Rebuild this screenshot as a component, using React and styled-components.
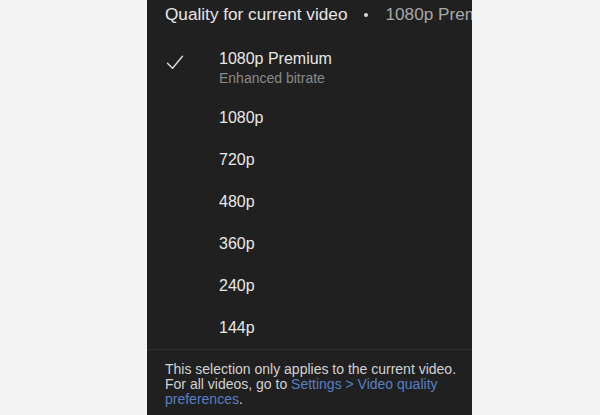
import React from "react";
import styled, { createGlobalStyle } from "styled-components";

const Global = createGlobalStyle`
  html, body { margin: 0; padding: 0; background: #f4f4f4; }
  body { font-family: "Liberation Sans", Arial, sans-serif; }
`;

const Page = styled.div`
  width: 600px;
  height: 415px;
  display: flex;
  justify-content: flex-start;
  background: #f4f4f4;
`;

const Sheet = styled.div`
  margin-left: 147px;
  width: 325px;
  height: 415px;
  background: #202020;
  overflow: hidden;
  display: flex;
  flex-direction: column;
`;

const Header = styled.div`
  display: flex;
  align-items: center;
  white-space: nowrap;
  padding: 4px 0 12px 18px;
  font-size: 17.2px;
  line-height: 20px;
`;

const HeaderTitle = styled.span`
  color: #e6e6e6;
`;

const Dot = styled.span`
  flex: none;
  width: 4px;
  height: 4px;
  border-radius: 50%;
  background: #d8d8d8;
  margin: 1px 17px 0 17px;
`;

const HeaderValue = styled.span`
  color: #a8a8a8;
`;

const List = styled.div`
  display: flex;
  flex-direction: column;
`;

const Row = styled.div`
  display: flex;
  align-items: flex-start;
  padding: ${(p) => (p.$tall ? "12.5px 0 9px" : "11px 0")};
`;

const CheckCol = styled.div`
  flex: none;
  width: 72px;
  height: 20px;
  position: relative;
`;

const CheckIcon = styled.svg`
  position: absolute;
  left: 19px;
  top: 6px;
`;

const Texts = styled.div`
  display: flex;
  flex-direction: column;
`;

const Label = styled.div`
  color: #e8e8e8;
  font-size: 16px;
  line-height: 20px;
`;

const Sub = styled.div`
  color: #8a8a8a;
  font-size: 14px;
  line-height: 19px;
`;

const Footer = styled.div`
  border-top: 1px solid #2f2f2f;
  padding: 12px 4px 0 18px;
  color: #d2d2d2;
  font-size: 14px;
  line-height: 15px;
`;

const Link = styled.span`
  color: #5a7fc2;
`;

const options = ["1080p", "720p", "480p", "360p", "240p", "144p"];

export default function App() {
  return (
    <>
      <Global />
      <Page>
        <Sheet>
          <Header>
            <HeaderTitle>Quality for current video</HeaderTitle>
            <Dot />
            <HeaderValue>1080p Premium</HeaderValue>
          </Header>
          <List>
            <Row $tall>
              <CheckCol>
                <CheckIcon width="18" height="15" viewBox="0 0 18 15">
                  <path
                    d="M1.5 8.2 L6.5 13.2 L16.5 1.2"
                    fill="none"
                    stroke="#dcdcdc"
                    strokeWidth="1.4"
                    strokeLinecap="round"
                    strokeLinejoin="round"
                  />
                </CheckIcon>
              </CheckCol>
              <Texts>
                <Label>1080p Premium</Label>
                <Sub>Enhanced bitrate</Sub>
              </Texts>
            </Row>
            {options.map((o) => (
              <Row key={o}>
                <CheckCol />
                <Texts>
                  <Label>{o}</Label>
                </Texts>
              </Row>
            ))}
          </List>
          <Footer>
            This selection only applies to the current video. For all videos, go to{" "}
            <Link>Settings &gt; Video quality preferences</Link>.
          </Footer>
        </Sheet>
      </Page>
    </>
  );
}
